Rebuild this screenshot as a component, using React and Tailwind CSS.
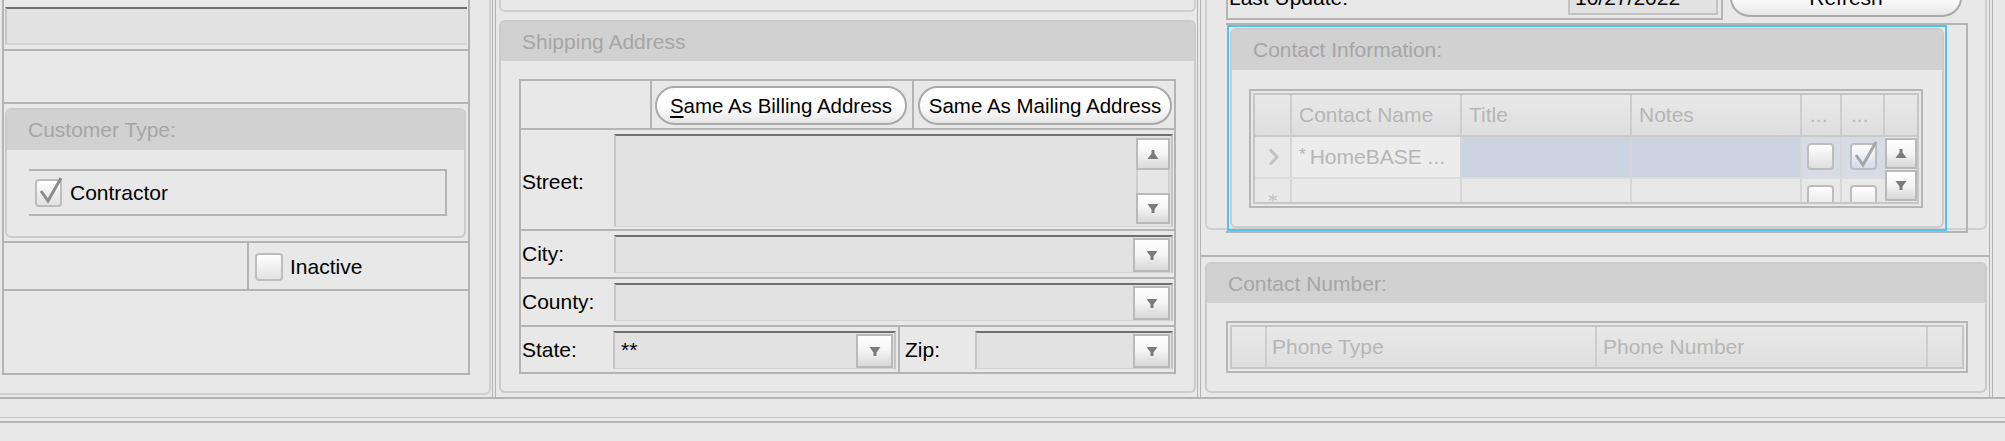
import React from 'react';

// small drawn glyphs
const TriDown = () => (
  <svg width="12" height="11" viewBox="0 0 12 11">
    <path d="M0.5 1h11L7.5 6.5V10h-3V6.5z" fill="#7b7b7b" />
  </svg>
);

const TriUp = () => (
  <svg width="12" height="11" viewBox="0 0 12 11">
    <path d="M0.5 10h11L7.5 4.5V1h-3v3.5z" fill="#7b7b7b" />
  </svg>
);

const ArrowBtn = ({ up = false, className = '' }) => (
  <div
    className={`flex items-center justify-center border-2 border-[#b9b9b9] bg-linear-to-b from-white via-[#f4f4f4] to-[#d8d8d8] ${className}`}
  >
    {up ? <TriUp /> : <TriDown />}
  </div>
);

const Combo = ({ className = '', value }) => (
  <div
    className={`flex h-[38px] border-t-2 border-r-2 border-l-2 border-b border-t-[#6f6f6f] border-r-[#c4c4c4] border-l-[#c6c6c6] border-b-[#d4d4d4] bg-[#e2e2e2] ${className}`}
  >
    <div className="flex-1 pl-[6px] pt-[5px] text-[21px] leading-[24px] text-black">{value}</div>
    <ArrowBtn className="mt-[1px] mr-[1px] h-[34px] w-[37px]" />
  </div>
);

const CheckBox = ({ checked = false, className = '', tint = 'to-[#e2e2e2]', mark = '#8d8d8d' }) => (
  <div
    className={`relative shrink-0 rounded-[4px] border-2 border-[#bdbdbd] bg-linear-to-b from-white ${tint} ${className}`}
  >
    {checked && (
      <svg className="absolute left-0 top-[-5px] overflow-visible" width="27" height="30" viewBox="0 0 27 30">
        <path d="M4 15 L11 25 L24 2" fill="none" stroke={mark} strokeWidth="3" />
      </svg>
    )}
  </div>
);

const Pill = ({ children, className = '' }) => (
  <div
    className={`flex items-center justify-center rounded-[20px] border-2 border-[#a9a9a9] bg-linear-to-b from-white via-white to-[#e6e6e6] text-[20.5px] leading-[24px] text-black ${className}`}
  >
    {children}
  </div>
);

const Group = ({ title, className = '', bandH = 'h-[40px]', children }) => (
  <div className={`rounded-[6px] border-2 border-[#cbcbcb] ${className}`}>
    <div className={`flex items-center rounded-t-[4px] bg-[#d1d1d1] pl-[21px] text-[21px] text-[#a6a6a6] ${bandH}`}>
      {title}
    </div>
    {children}
  </div>
);

const HeadCell = ({ w, children, last = false, pl = 'pl-[7px]' }) => (
  <div className={`flex items-center ${pl} ${w} ${last ? '' : 'border-r-2 border-[#cdcdcd]'}`}>{children}</div>
);

export default function App() {
  return (
    <div className="h-[441px] w-[2005px] overflow-hidden bg-[#e8e8e8] font-['Liberation_Sans',Arial,sans-serif] text-[21px] leading-[24px] text-black">
      <div className="flex h-[397px]">
        {/* Left column */}
        <div className="w-[492px] shrink-0">
          <div className="h-[395px] w-[491px] rounded-br-[6px] border-r-2 border-b-2 border-[#cfcfcf] pl-[2px]">
            <div className="w-[468px] border-x-2 border-b-2 border-[#b4b4b4]">
              <div className="h-[49px] pt-[7px] pl-[1px]">
                <div className="h-[38px] w-[462px] border-t-2 border-l-2 border-b-2 border-t-[#6f6f6f] border-l-[#c6c6c6] border-b-[#d6d6d6] bg-[#e2e2e2]" />
              </div>
              <div className="h-[53px] border-t-2 border-[#b4b4b4]" />
              <div className="h-[139px] border-t-2 border-[#b4b4b4] pt-[4px] pl-[1px]">
                <Group title="Customer Type:" className="h-[130px] w-[461px]">
                  <div className="ml-[22px] mt-[19px] flex h-[47px] w-[418px] items-center border-t-2 border-r-2 border-b-2 border-[#b4b4b4]">
                    <CheckBox checked className="ml-[6px] h-[28px] w-[27px]" />
                    <span className="ml-[8px]">Contractor</span>
                  </div>
                </Group>
              </div>
              <div className="flex h-[48px] border-t-2 border-[#b4b4b4]">
                <div className="w-[245px] border-r-2 border-[#b4b4b4]" />
                <div className="flex flex-1 items-center pl-[6px] pt-[1px]">
                  <CheckBox className="h-[28px] w-[28px]" />
                  <span className="ml-[7px]">Inactive</span>
                </div>
              </div>
              <div className="h-[84px] border-t-2 border-[#b4b4b4]" />
            </div>
          </div>
        </div>

        <div className="w-[4px] shrink-0 border-x border-[#b4b4b4]" />

        {/* Middle column */}
        <div className="w-[701px] shrink-0 pl-[3px]">
          <div className="h-[12px] w-[697px] rounded-b-[6px] border-x-2 border-b-2 border-[#cfcfcf]" />
          <Group title="Shipping Address" bandH="h-[39px]" className="mt-[8px] h-[373px] w-[697px]">
            <div className="ml-[18px] mt-[18px] w-[657px] border-2 border-[#b4b4b4]">
              <div className="flex h-[49px] border-b-2 border-[#b4b4b4]">
                <div className="w-[131px] border-r-2 border-[#b4b4b4]" />
                <div className="w-[262px] border-r-2 border-[#b4b4b4] pl-[3px] pt-[5px]">
                  <Pill className="h-[39px] w-[252px]">
                    <span>
                      <span className="underline underline-offset-[3px]">S</span>ame As Billing Address
                    </span>
                  </Pill>
                </div>
                <div className="flex-1 pl-[4px] pt-[5px]">
                  <Pill className="h-[39px] w-[254px]">Same As Mailing Address</Pill>
                </div>
              </div>

              <div className="flex h-[101px] border-b-2 border-[#b4b4b4]">
                <div className="flex w-[93px] items-center pl-[1px] pt-[4px]">Street:</div>
                <div className="mt-[4px] flex h-[93px] w-[559px] border-t-2 border-r-2 border-l-2 border-b border-t-[#6f6f6f] border-r-[#c4c4c4] border-l-[#c6c6c6] border-b-[#d4d4d4] bg-[#e2e2e2]">
                  <div className="flex-1" />
                  <div className="mt-[2px] mr-[1px] flex w-[34px] flex-col">
                    <ArrowBtn up className="h-[32px]" />
                    <div className="flex-1 border-x-2 border-[#cfcfcf] bg-[#e6e6e6]" />
                    <ArrowBtn className="mb-[2px] h-[31px]" />
                  </div>
                </div>
              </div>

              <div className="flex h-[48px] border-b-2 border-[#b4b4b4]">
                <div className="flex w-[93px] items-center pl-[1px]">City:</div>
                <Combo className="mt-[4px] w-[559px]" />
              </div>

              <div className="flex h-[48px] border-b-2 border-[#b4b4b4]">
                <div className="flex w-[93px] items-center pl-[1px]">County:</div>
                <Combo className="mt-[4px] w-[559px]" />
              </div>

              <div className="flex h-[45px]">
                <div className="flex w-[92px] items-center pl-[1px]">State:</div>
                <Combo className="mt-[4px] w-[283px]" value="**" />
                <div className="ml-[2px] w-[2px] bg-[#b4b4b4]" />
                <div className="flex w-[75px] items-center pl-[5px]">Zip:</div>
                <Combo className="mt-[4px] w-[198px]" />
              </div>
            </div>
          </Group>
        </div>

        <div className="w-[4px] shrink-0 border-x border-[#b4b4b4]" />

        {/* Right column */}
        <div className="flex w-[788px] shrink-0 flex-col">
          <div className="h-[255px] pl-[4px]">
            <div className="h-[252px] w-[782px] rounded-b-[6px] border-x-2 border-b-2 border-[#cfcfcf] pl-[19px]">
              <div className="-mt-[22px] flex h-[42px]">
                <div className="flex w-[497px] border-x-2 border-b-2 border-[#b4b4b4]">
                  <div className="flex-1 pl-[1px] pt-[8px]">Last Update:</div>
                  <div className="mr-[3px] h-[37px] w-[150px] border-2 border-[#c2c2c2] bg-[#e2e2e2] pl-[5px] pt-[6px]">
                    10/27/2022
                  </div>
                </div>
                <Pill className="ml-[7px] h-[39px] w-[232px] text-[21px]">Refresh</Pill>
              </div>

              <div className="mt-[3px] h-[210px] w-[742px] border-t-2 border-r-2 border-b-2 border-[#b4b4b4]">
                <div className="ml-[1px] h-[206px] w-[720px] border-2 border-[#4fc4f0] pt-[1px] pl-[1px]">
                  <Group title="Contact Information:" className="h-[200px] w-[714px]">
                    <div className="ml-[17px] mt-[19px] h-[119px] w-[674px] border-2 border-[#b6b6b6] p-[2px]">
                      <div className="h-full overflow-hidden border-2 border-[#c6c6c6] text-[#b6b6b6]">
                        <div className="flex h-[42px] border-b-2 border-[#cacaca] bg-linear-to-b from-[#e9e9e9] to-[#dedede]">
                          <HeadCell w="w-[37px]" />
                          <HeadCell w="w-[170px]">Contact Name</HeadCell>
                          <HeadCell w="w-[170px]">Title</HeadCell>
                          <HeadCell w="w-[170px]">Notes</HeadCell>
                          <HeadCell w="w-[40px]" pl="pl-[8px]">...</HeadCell>
                          <HeadCell w="w-[43px]" pl="pl-[9px]">...</HeadCell>
                          <HeadCell w="w-[32px]" last />
                        </div>
                        <div className="flex">
                          <div className="w-[630px]">
                            <div className="flex h-[42px] border-b-2 border-[#dcdcdc]">
                              <div className="flex w-[37px] items-center border-r-2 border-[#d6d6d6] pl-[13px]">
                                <svg width="12" height="18" viewBox="0 0 12 18">
                                  <path d="M2 1.5 L9 9 L2 16.5" fill="none" stroke="#c2c2c2" strokeWidth="3" />
                                </svg>
                              </div>
                              <div className="flex w-[170px] items-center border-r-2 border-[#d6d6d6] bg-[#ececec] pl-[7px]">
                                <span className="mr-[4px] self-start pt-[9px] text-[17px] leading-[17px]">*</span>
                                <span>HomeBASE ...</span>
                              </div>
                              <div className="w-[170px] border-r-2 border-[#d6d6d6] bg-[#ccd3e1]" />
                              <div className="w-[170px] border-r-2 border-[#d6d6d6] bg-[#ccd3e1]" />
                              <div className="w-[40px] border-r-2 border-[#d6d6d6] bg-[#d7dbe4] pl-[5px] pt-[6px]">
                                <CheckBox className="h-[27px] w-[27px]" tint="to-[#dedede]" />
                              </div>
                              <div className="w-[43px] bg-[#d7dbe4] pl-[8px] pt-[6px]">
                                <CheckBox checked className="h-[27px] w-[27px]" tint="to-[#d4dbe8]" mark="#a5a5a5" />
                              </div>
                            </div>
                            <div className="flex h-[23px]">
                              <div className="flex w-[37px] items-end justify-center border-r-2 border-[#d6d6d6]">
                                <svg width="10" height="8" viewBox="0 0 10 8">
                                  <path d="M5 0v8M1 2l8 4M1 6l8-4" stroke="#c8c8c8" strokeWidth="1.5" />
                                </svg>
                              </div>
                              <div className="w-[170px] border-r-2 border-[#d6d6d6]" />
                              <div className="w-[170px] border-r-2 border-[#d6d6d6]" />
                              <div className="w-[170px] border-r-2 border-[#d6d6d6]" />
                              <div className="w-[40px] border-r-2 border-[#d6d6d6] pl-[5px] pt-[6px]">
                                <CheckBox className="h-[27px] w-[27px]" />
                              </div>
                              <div className="w-[43px] pl-[8px] pt-[6px]">
                                <CheckBox className="h-[27px] w-[27px]" />
                              </div>
                            </div>
                          </div>
                          <div className="flex w-[32px] flex-col gap-[1px] pt-[1px]">
                            <ArrowBtn up className="h-[31px]" />
                            <ArrowBtn className="h-[31px]" />
                          </div>
                        </div>
                      </div>
                    </div>
                  </Group>
                </div>
              </div>
            </div>
          </div>

          <div className="h-[2px] bg-[#b4b4b4]" />

          <div className="pl-[4px] pt-[5px]">
            <Group title="Contact Number:" bandH="h-[39px]" className="h-[131px] w-[782px]">
              <div className="ml-[19px] mt-[18px] h-[52px] w-[742px] border-2 border-[#b6b6b6] p-[2px]">
                <div className="flex h-full border-2 border-[#c6c6c6] bg-linear-to-b from-[#e9e9e9] to-[#dedede] text-[#b6b6b6]">
                  <HeadCell w="w-[35px]" />
                  <HeadCell w="w-[330px]" pl="pl-[5px]">Phone Type</HeadCell>
                  <HeadCell w="w-[331px]" pl="pl-[6px]">Phone Number</HeadCell>
                  <HeadCell w="w-[30px]" last />
                </div>
              </div>
            </Group>
          </div>
        </div>

        <div className="w-[4px] shrink-0 border-x border-[#b4b4b4]" />
      </div>

      <div className="h-[2px] bg-[#b4b4b4]" />
      <div className="h-[18px]" />
      <div className="h-[1px] bg-[#c2c2c2]" />
      <div className="h-[3px]" />
      <div className="h-[2px] bg-[#b4b4b4]" />
    </div>
  );
}
